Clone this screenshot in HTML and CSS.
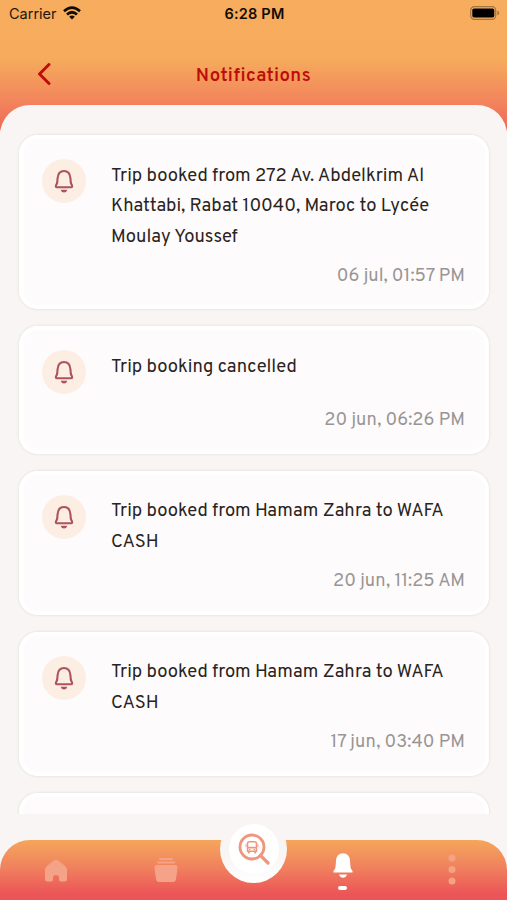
FILE: index.html
```html
<!DOCTYPE html>
<html lang="en">
<head>
<meta charset="utf-8">
<title>Notifications</title>
<link rel="stylesheet" href="styles.css">
</head>
<body>
<svg class="defs" width="0" height="0" aria-hidden="true">
  <symbol id="bell" viewBox="0 0 20 24">
    <path d="M3.200 13.500 3.600 9C4 4.400 6.400 2 10 2S16 4.400 16.400 9L16.800 13.500Q17 14.800 17.800 15.800 18.800 18.300 17 18.300H3Q1.200 18.300 2.200 15.800 3 14.800 3.200 13.500Z" fill="none" stroke="currentColor" stroke-width="2.100" stroke-linejoin="round"/>
    <path d="M6.600 20.800H13.400Q12.600 23.600 10 23.600T6.600 20.800Z" fill="currentColor"/>
  </symbol>
</svg>
<div class="screen">
  <div class="status">
    <div class="carrier"><span>Carrier</span>
      <svg width="18" height="14" viewBox="0 0 18 14" fill="none" stroke="#120c06" stroke-width="2.700"><path d="M1 5.200Q9-2 17 5.200M4 8.500Q9 4 14 8.500"/><path d="M6.200 10.700Q9 8.400 11.800 10.700L9 13.600Z" fill="#120c06" stroke="none"/></svg>
    </div>
    <span class="clock">6:28 PM</span>
    <svg class="battery" width="30" height="14" viewBox="0 0 30 14"><rect x=".7" y=".7" width="25" height="12.600" rx="3.600" fill="none" stroke="#a1763f" stroke-width="1.200"/><rect x="2.300" y="2.500" width="22" height="9" rx="1.800" fill="#000"/><path d="M27.300 4.700Q29.300 5.300 29.300 7T27.300 9.300Z" fill="#a1763f"/></svg>
  </div>
  <header class="header">
    <svg class="back" width="14" height="22" viewBox="0 0 14 22"><path d="M12 1.500 2.500 11 12 20.500" fill="none" stroke="#bd0d08" stroke-width="2.900" stroke-linecap="round" stroke-linejoin="round"/></svg>
    <h1>Notifications</h1>
  </header>
  <main class="panel">
    <div class="list">
      <article class="card">
        <div class="badge"><svg width="20" height="24"><use href="#bell"/></svg></div>
        <div class="body"><p>Trip booked from 272 Av. Abdelkrim Al<br>Khattabi, Rabat 10040, Maroc to Lycée<br>Moulay Youssef</p><time>06 jul, 01:57 PM</time></div>
      </article>
      <article class="card">
        <div class="badge"><svg width="20" height="24"><use href="#bell"/></svg></div>
        <div class="body"><p>Trip booking cancelled</p><time>20 jun, 06:26 PM</time></div>
      </article>
      <article class="card">
        <div class="badge"><svg width="20" height="24"><use href="#bell"/></svg></div>
        <div class="body"><p>Trip booked from Hamam Zahra to WAFA<br>CASH</p><time>20 jun, 11:25 AM</time></div>
      </article>
      <article class="card">
        <div class="badge"><svg width="20" height="24"><use href="#bell"/></svg></div>
        <div class="body"><p>Trip booked from Hamam Zahra to WAFA<br>CASH</p><time>17 jun, 03:40 PM</time></div>
      </article>
      <article class="card"></article>
    </div>
  </main>
  <nav class="tabs">
    <div class="tab"><svg width="24" height="24" viewBox="0 0 24 24"><path d="M4 6 10 1.500Q12 .2 14 1.500L20 6Q23 8.500 23 11V20Q23 22.500 20.500 22.500H17Q15 22.500 15 20V18Q15 16 12 16T9 18V20Q9 22.500 7 22.500H3.500Q1 22.500 1 20V11Q1 8.500 4 6Z" fill="#f4a388"/></svg></div>
    <div class="tab"><svg width="24" height="26" viewBox="0 0 24 26" fill="#f4a388"><rect x="5" y="1" width="14" height="2" rx="1"/><rect x="3" y="4.500" width="18" height="2" rx="1"/><path d="M3 8H21Q24 8 23.500 11L22 22Q21.500 25 19 25H5Q2.500 25 2 22L.5 11Q0 8 3 8Z"/></svg></div>
    <div class="tab"></div>
    <div class="tab active"><svg width="20" height="25" viewBox="0 0 20 25" fill="#fff"><path d="M.5 19.500V17.800Q2.300 16.500 2.500 14L3 8Q3.500.3 10 .3T17 8L17.500 14Q17.700 16.500 19.500 17.800V19.500Z"/><path d="M6 21.500H14Q12.700 24.700 10 24.700T6 21.500Z"/></svg><i></i></div>
    <div class="tab"><svg width="8" height="32" viewBox="0 0 8 32" fill="#f7a184"><circle cx="4" cy="4" r="3.500"/><circle cx="4" cy="15.500" r="3.500"/><circle cx="4" cy="27" r="3.500"/></svg></div>
    <div class="search"><div><svg width="32" height="32" viewBox="0 0 32 32" fill="none" stroke="#ef967f"><circle cx="14" cy="14" r="12" stroke-width="2.800"/><path d="M22.500 22.500 30 30" stroke-width="3.200" stroke-linecap="round"/><path d="M9.500 18.300V10.500Q9.500 8.700 11.500 8.700H16.500Q18.500 8.700 18.500 10.500V18.300Z" stroke-width="1.500"/><path d="M9 14.600H19M10.800 18V20.500M17.200 18V20.500" stroke-width="1.700"/><path d="M8 11V14M20 11V14" stroke-width=".8"/><path d="M10.800 16.700H12.400M15.600 16.700H17.200" stroke-width="1.200"/></svg></div></div>
  </nav>
</div>
</body>
</html>
```
FILE: styles.css
```css
* { box-sizing: border-box; }
body { margin: 0; font-family: Overpass, Roboto, sans-serif; background: #f8f5f4; }
.defs { position: absolute; }
.screen {
  width: 507px; height: 900px; overflow: hidden;
  display: flex; flex-direction: column;
  background: #f8f5f4 linear-gradient(#f6ad5d 0, #f6ac5c 58px, #f2805c 106px, #ee6957 130px, #f8f5f4 131px);
}
.status {
  height: 28px; padding: 0 7px 0 9px; flex: none;
  display: grid; grid-template-columns: 1fr auto 1fr; align-items: center;
  font: 14.500px Inter, sans-serif; color: #24180c;
}
.carrier { display: flex; align-items: center; gap: 6px; }
.carrier svg { margin-top: -2px; }
.clock { font-weight: 600; letter-spacing: .2px; color: #120c06; }
.carrier span, .clock { margin-top: -1px; }
.battery { justify-self: end; margin-top: -2px; }
.header {
  height: 77px; flex: none; padding: 0 37px;
  display: grid; grid-template-columns: 1fr auto 1fr; align-items: center;
}
.back { margin-top: 15px; }
h1 { margin: 19px 0 0; font-size: 18.600px; font-weight: 600; letter-spacing: .5px; color: #bd0d08; }
.panel {
  height: 709px; flex: none; padding: 30px 18px 0 19px;
  background: #f8f5f4; border-radius: 30px 30px 0 0;
}
.list {
  height: 679px; overflow: hidden; margin: -4px -8px 0; padding: 4px 8px 0;
  display: flex; flex-direction: column; gap: 17px;
  height: 683px;
}
.card {
  flex: none; min-height: 127.500px; padding: 24px 24px 16.900px 23px;
  display: flex; gap: 25px;
  background: #fdfbfb; border-radius: 19px;
  box-shadow: 0 0 2px 1px #ebe7e5, inset 0 0 3px 4px #fff;
}
.badge {
  width: 44px; height: 44px; flex: none;
  display: flex; align-items: center; justify-content: center;
  border-radius: 50%; background: #fceee2; color: #ad535c;
}
.body { flex: 1; display: flex; flex-direction: column; justify-content: space-between; }
p { margin: 0; padding-top: 2.500px; font-size: 18.400px; line-height: 30.500px; color: #292321; white-space: nowrap; }
time { align-self: flex-end; margin-top: 7.500px; font-size: 18.300px; line-height: 32px; color: #999594; }
.tabs {
  position: relative; height: 60px; flex: none; margin-top: 26px; padding: 0 1px;
  display: grid; grid-template-columns: repeat(5, 1fr);
  background: linear-gradient(#f5a65b, #f0825e 45%, #ec5557 90%);
  border-radius: 30px 30px 0 0;
}
.tab { display: flex; flex-direction: column; align-items: center; justify-content: center; }
.tab:nth-child(1) { padding: 1px 0 0 8px; }
.tab:nth-child(2) { padding-left: 26px; }
.tab:nth-child(4) { padding-right: 24px; }
.tab:nth-child(5) { padding-right: 8px; }
.tab.active { justify-content: flex-start; padding-top: 13px; }
.active i { width: 9px; height: 4px; margin-top: 8px; border-radius: 2px; background: #fff; }
.search {
  position: absolute; left: 220px; top: -25px; width: 67px; height: 68px; padding-top: 9px;
  display: flex; justify-content: center;
  border-radius: 50%; background: linear-gradient(#f8f5f4 60%, #fff);
}
.search > div {
  width: 50px; height: 50px; border-radius: 50%; background: #fff;
  display: flex; align-items: center; justify-content: center;
}
```
